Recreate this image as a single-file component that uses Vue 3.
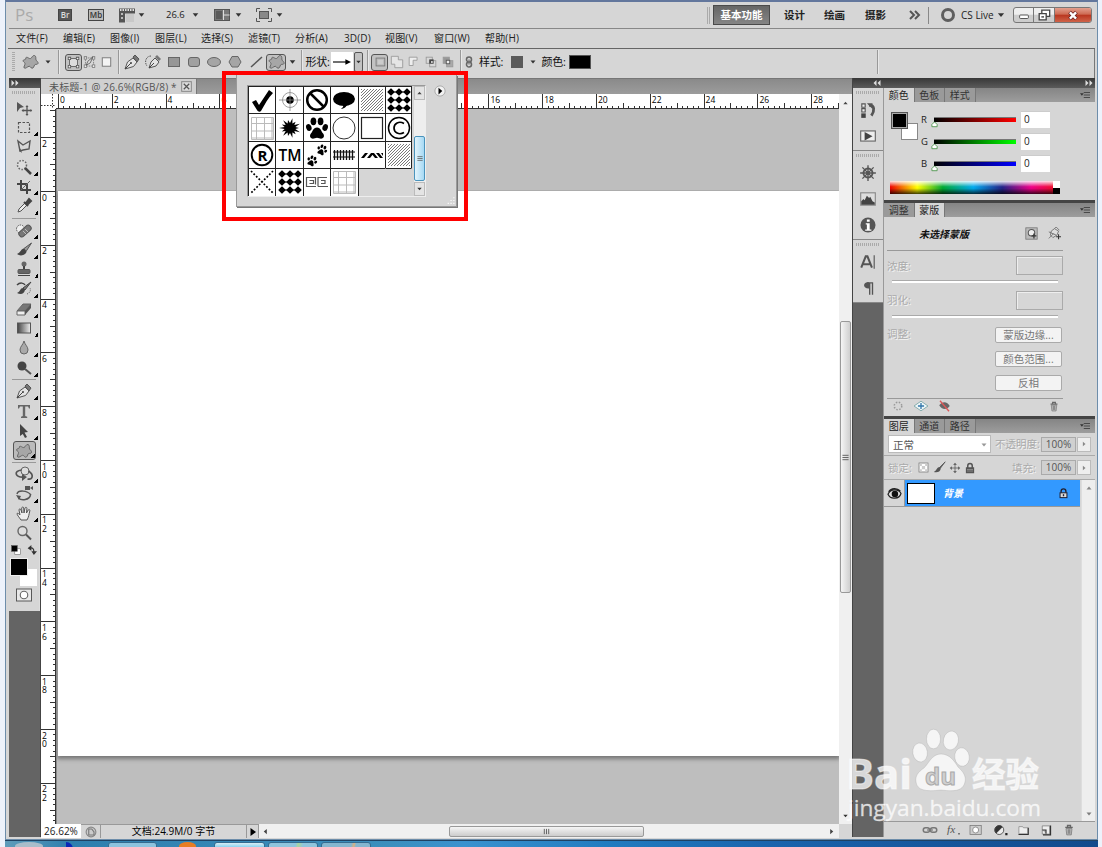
<template>
  <div class="desktop">
    <div class="window">
      <header class="app-bar">
        <span class="ps">Ps</span>
        <span class="badge">Br</span>
        <span class="badge">Mb</span>
        <Icon name="film" /><Icon name="down" />
        <span class="zoom-val">26.6</span><Icon name="down" />
        <Icon name="arrange" /><Icon name="down" />
        <Icon name="screen" /><Icon name="down" />
        <i></i>
        <span class="double-line"></span>
        <button class="ws active">基本功能</button>
        <button v-for="w in workspaces" :key="w" class="ws">{{ w }}</button>
        <Icon name="more" />
        <span class="v-line"></span>
        <Icon name="ring" />
        <span class="cs-live">CS Live<Icon name="down" :w="10" /></span>
        <div class="win-btns">
          <span><Icon name="min" :w="18" :h="14" /></span>
          <span><Icon name="restore" :w="16" :h="14" /></span>
          <span class="close"><Icon name="close" :w="14" :h="11" /></span>
        </div>
      </header>

      <nav class="menu">
        <span v-for="m in menus" :key="m">{{ m }}</span>
      </nav>

      <div class="options">
        <i class="grip-v"></i>
        <Icon name="blob" :w="17" /><Icon name="down" :w="8" />
        <i class="sep"></i>
        <b class="picked"><Icon name="shapeLayer" :w="13" :h="13" /></b>
        <Icon name="paths" :w="13" /><Icon name="fillPx" :w="15" />
        <i class="sep"></i>
        <Icon name="pen" :w="18" /><Icon name="freePen" :w="20" />
        <Icon name="rect" /><Icon name="round" /><Icon name="ellipse" /><Icon name="polygon" /><Icon name="line" />
        <b class="picked wide"><Icon name="blob" :w="17" /></b>
        <Icon name="down" :w="9" />
        <i class="sep"></i>
        <span class="label">形状:</span>
        <b class="preview"><Icon name="arrow" :w="18" :h="18" /></b>
        <b class="dd"><Icon name="down" :w="7" /></b>
        <i class="sep"></i>
        <b class="picked"><Icon name="opNew" :w="14" :h="14" /></b>
        <Icon name="opAdd" :w="14" /><Icon name="opSub" :w="14" /><Icon name="opInt" :w="14" /><Icon name="opXor" :w="14" />
        <i class="sep"></i>
        <Icon name="chain" :w="10" />
        <span class="label">样式:</span>
        <b class="style-swatch"></b>
        <Icon name="down" :w="8" />
        <span class="label">颜色:</span>
        <b class="color-swatch"></b>
        <i></i>
        <i class="sep"></i>
      </div>

      <main class="workspace">
        <aside class="tools">
          <div class="dark-head"><Icon name="ffwd" :w="8" :h="8" /></div>
          <div class="tool-body">
            <i class="grip-h"></i>
            <template v-for="(group, g) in tools" :key="g">
              <i v-if="g" class="tool-sep"></i>
              <div v-for="t in group" :key="t" class="tool" :class="{ active: t === 'blob' }">
                <Icon :name="t" :w="18" :h="18" />
                <em v-if="t !== 'move' && t !== 'zoom'"></em>
              </div>
            </template>
            <div class="mini"><Icon name="defaults" :w="12" :h="12" /><Icon name="swap" :w="12" :h="12" /></div>
            <div class="swatches"><b class="bg"></b><b class="fg"></b></div>
            <Icon name="quickMask" :w="16" :h="12" />
          </div>
        </aside>

        <section class="doc">
          <div class="tab-bar">
            <div class="doc-tab"><span>未标题-1 @ 26.6%(RGB/8) *</span><Icon name="tabClose" :w="11" :h="11" /></div>
          </div>
          <div class="doc-grid">
            <svg class="corner" width="15" height="15"><path d="M11.5 0v15M0 11.5h15" stroke="#333" stroke-dasharray="1.5 1.5" /></svg>
            <svg class="ruler-h" width="783" height="15">
              <path :d="hTicks" stroke="#333" fill="none" />
              <text v-for="n in hNumbers" :key="n.x" :x="n.x" y="9.3">{{ n.t }}</text>
            </svg>
            <svg class="ruler-v" width="15" height="715">
              <path :d="vTicks" stroke="#333" fill="none" />
              <text v-for="(n, i) in vNumbers" :key="i" x="1" :y="n.y">{{ n.t }}</text>
            </svg>
            <div class="pasteboard"><div class="canvas"></div></div>
            <div class="scroll-v">
              <Icon name="up" :w="7" :h="8" />
              <div class="thumb"><Icon name="gripLines" :w="7" :h="7" /></div>
              <Icon name="down" :w="7" :h="8" />
            </div>
          </div>
          <footer class="status">
            <span class="pct">26.62%</span>
            <span class="clock"><Icon name="clock" :w="12" :h="12" /></span>
            <span class="info">文档:24.9M/0 字节</span>
            <span class="play"><Icon name="play" :w="8" :h="8" /></span>
            <div class="scroll-h">
              <Icon name="left" :w="7" :h="7" />
              <div class="thumb"><Icon name="gripCols" :w="9" :h="7" /></div>
              <Icon name="right" :w="7" :h="7" />
            </div>
            <i></i>
          </footer>
        </section>

        <aside class="right">
          <div class="dark-head"><Icon name="rewind" :w="8" :h="8" /><Icon name="ffwd" :w="8" :h="8" /></div>
          <div class="right-cols">
            <div class="dock">
              <div v-for="(group, g) in dock" :key="g" class="dock-group">
                <i class="grip-h"></i>
                <Icon v-for="d in group" :key="d" :name="d" :w="18" :h="18" />
              </div>
            </div>

            <div class="panels">
              <section class="panel color">
                <div class="tabs"><span class="on">颜色</span><span>色板</span><span>样式</span><Icon name="panelMenu" :w="14" :h="10" /></div>
                <div class="color-body">
                  <div class="pair"><b class="bg"></b><b class="fg"></b></div>
                  <div class="channels">
                    <div v-for="c in channels" :key="c.name" class="channel">
                      <span>{{ c.name }}</span>
                      <div class="track" :style="{ background: `linear-gradient(90deg, #000, ${c.end})` }">
                        <Icon name="knob" :w="9" :h="7" />
                      </div>
                      <span class="field">{{ c.value }}</span>
                    </div>
                  </div>
                </div>
                <div class="spectrum"><i></i></div>
              </section>

              <section class="panel mask">
                <div class="tabs"><span>调整</span><span class="on">蒙版</span><Icon name="panelMenu" :w="14" :h="10" /></div>
                <div class="mask-title"><span>未选择蒙版</span><Icon name="pixelMask" :w="13" :h="13" /><Icon name="vectorMask" :w="13" :h="13" /></div>
                <div v-for="s in ['浓度:', '羽化:']" :key="s" class="mask-slider">
                  <div><span class="ghost">{{ s }}</span><b></b></div>
                  <i></i>
                </div>
                <div class="mask-adjust">
                  <span class="ghost">调整:</span>
                  <div><button v-for="b in maskButtons" :key="b">{{ b }}</button></div>
                </div>
                <div class="mask-foot"><Icon name="dotted" :w="12" :h="12" /><Icon name="apply" :w="16" :h="14" /><Icon name="noEye" :w="13" :h="12" /><Icon name="trash" :w="12" :h="11" /></div>
              </section>

              <section class="panel layers">
                <div class="tabs"><span class="on">图层</span><span>通道</span><span>路径</span><Icon name="panelMenu" :w="14" :h="10" /></div>
                <div class="layer-row">
                  <div class="select"><span>正常</span><Icon name="down" :w="8" :h="8" /></div>
                  <span class="ghost">不透明度:</span>
                  <b class="percent">100%</b><b class="step"><Icon name="right" :w="6" :h="6" /></b>
                </div>
                <div class="layer-row locks">
                  <span class="ghost">锁定:</span>
                  <Icon name="checker" :w="13" :h="13" /><Icon name="brushSm" :w="13" :h="13" /><Icon name="cross" :w="12" :h="12" /><Icon name="lock" :w="12" :h="12" />
                  <span class="ghost fill">填充:</span>
                  <b class="percent">100%</b><b class="step"><Icon name="right" :w="6" :h="6" /></b>
                </div>
                <div class="layer-list">
                  <div class="layer">
                    <span class="eye"><Icon name="eye" :w="13" :h="13" /></span>
                    <div class="layer-main"><b></b><span>背景</span><Icon name="lockLight" :w="11" :h="11" /></div>
                  </div>
                  <div class="list-scroll"><Icon name="up" :w="8" :h="8" /><Icon name="down" :w="8" :h="8" /></div>
                </div>
                <div class="layers-foot">
                  <Icon v-for="f in layerActions" :key="f" :name="f" :w="16" :h="12" />
                </div>
              </section>
            </div>
          </div>
        </aside>
      </main>
    </div>

    <div class="taskbar">
      <i class="orb"></i><i class="swoosh"></i>
      <i class="task one"></i><i class="orange"></i><i class="task two"></i><i class="task three"></i><i class="task four"></i>
    </div>

    <div class="picker">
      <div class="picker-list">
        <div class="cells">
          <div v-for="(s, i) in shapes" :key="i" :class="{ empty: !s }"><Icon v-if="s" :name="s" :w="26" :h="26" :box="26" /></div>
        </div>
        <div class="picker-scroll">
          <span><Icon name="up" :w="7" :h="8" /></span>
          <div class="blue-thumb"><Icon name="gripLines" :w="6" :h="7" /></div>
          <span><Icon name="down" :w="7" :h="8" /></span>
        </div>
      </div>
      <Icon class="flyout" name="flyout" :w="12" :h="12" />
      <Icon class="resize" name="resize" :w="9" :h="9" />
    </div>
    <div class="highlight"></div>

    <svg class="watermark" width="204" height="98" viewBox="0 0 204 98">
      <g fill="#fff" fill-opacity=".75">
        <g stroke="#999" stroke-opacity=".35" stroke-width=".8">
          <ellipse cx="75" cy="27.500" rx="7.300" ry="9.500" transform="rotate(-8 75 27)" />
          <ellipse cx="88.500" cy="14" rx="7" ry="9.800" />
          <ellipse cx="106" cy="15.500" rx="7.500" ry="9.500" transform="rotate(12 106 15)" />
          <ellipse cx="117" cy="32" rx="7.300" ry="9.300" transform="rotate(-8 117 32)" />
          <path d="M96 29c9 0 14 8 17 13 7 6 8 11 7 15-2 8-8 10-24 8-16 2-24 0-25-8-1-6 2-10 8-14 5-5 8-14 17-14z" />
        </g>
        <g stroke="#fff" stroke-opacity=".5" stroke-width="1.200">
          <text x="1" y="64" font-size="42" font-weight="700" textLength="66" lengthAdjust="spacingAndGlyphs">Bai</text>
          <text x="127" y="62" font-size="34" font-weight="700" textLength="67" lengthAdjust="spacingAndGlyphs">经验</text>
          <text x="3" y="91" font-size="22" stroke-width=".4" textLength="193" lengthAdjust="spacingAndGlyphs">jingyan.baidu.com</text>
        </g>
      </g>
      <text x="80" y="60" font-size="23" font-weight="700" fill="#d0d0d0" stroke="#aaa" stroke-width="1" textLength="31" lengthAdjust="spacingAndGlyphs">du</text>
    </svg>
  </div>
</template>

<script setup>
import { h } from 'vue'

const hatch = (() => {
  let d = ''
  for (let k = 5; k < 48; k += 3) {
    const x1 = Math.max(2, k - 24), x2 = Math.min(24, k - 2)
    d += `M${x1} ${k - x1}L${x2} ${k - x2}`
  }
  return `<path d="${d}" stroke="#555" stroke-width=".8"/>`
})()

const dots = [5, 13, 21].flatMap(y => [5, 13, 21].map(x => `M${x} ${y - 2.8}l2.800 2.800-2.800 2.800-2.800-2.800z`)).join('')
const diamonds = `<path d="${dots}" stroke="#000" stroke-width="1.600" stroke-linejoin="round"/><path d="M2 5h22M2 13h22M2 21h22" stroke="#000"/>`
const gridShape = '<path d="M2.500 2.500h22v22h-22zM7.500 2v22M15.500 2v22M23 2v22M2 8.500h22M2 16h22M2 23h22" fill="none" stroke="#bbb"/>'
const paw = (x, y, s, r) => `<g transform="translate(${x} ${y}) rotate(${r}) scale(${s})"><ellipse cx="-8" cy="-1" rx="2.600" ry="3.400" transform="rotate(-20 -8 -1)"/><ellipse cx="-3.500" cy="-7" rx="2.800" ry="3.800"/><ellipse cx="3.500" cy="-7" rx="2.800" ry="3.800"/><ellipse cx="8" cy="-1" rx="2.600" ry="3.400" transform="rotate(20 8 -1)"/><path d="M0-1c4 0 4 4 6 6 2 3 0 5-2 5l-4-1-4 1c-2 0-4-2-2-5 2-2 2-6 6-6z"/></g>`
const burst = Array.from({ length: 28 }, (_, i) => {
  const a = i * Math.PI / 14, r = i % 2 ? 5.5 : i % 4 ? 11 : 9
  return `${13 + r * Math.cos(a)},${13 + r * Math.sin(a) * 0.9}`
}).join(' ')
const back = (x, y, f = '#d8d8d8') => `<rect x="${x}" y="${y}" width="7" height="7" fill="${f}" stroke="#999"/>`

// Inner markup of every glyph, drawn on a 16x16 box (26x26 for the picker shapes)
const icons = {
  down: '<path d="M3 5h10l-5 6z" fill="#333"/>',
  up: '<path d="M3 11h10L8 5z" fill="#444"/>',
  left: '<path d="M11 2v12L4 8z" fill="#444"/>',
  right: '<path d="M5 2v12l7-6z" fill="#444"/>',
  play: '<path d="M3 0v16l11-8z" fill="#000"/>',
  ffwd: '<path d="M1 2v12l6-6zM9 2v12l6-6z" fill="#ddd"/>',
  rewind: '<path d="M7 2v12L1 8zM15 2v12L9 8z" fill="#ddd"/>',
  film: '<path d="M0 1.500h16v5H6v9H0z" fill="#555"/><path d="M1 3h14" stroke="#ddd" stroke-width="2" stroke-dasharray="1.500 1"/><path d="M2 6h2v2H2zM2 10h2v2H2z" fill="#bbb"/><rect x="7" y="7" width="8" height="8" fill="#c8c8c8"/>',
  arrange: '<rect x=".5" y="2.500" width="15" height="11" fill="#777" stroke="#555"/><path d="M9.500 3v10M9.500 8h6" stroke="#ddd"/><rect x="2" y="4" width="6" height="8" fill="#5a5a5a"/>',
  screen: '<rect x="3.500" y="4.500" width="9" height="7" fill="#888" stroke="#555"/><path d="M.5 5V1.500H4M12 1.500h3.500V5M15.500 11v3.500H12M4 14.500H.5V11" fill="none" stroke="#555"/>',
  more: '<path d="M2 4l4 4-4 4M7 4l4 4-4 4" fill="none" stroke="#555" stroke-width="2"/>',
  ring: '<circle cx="8" cy="8" r="5.500" fill="none" stroke="#5f5f5f" stroke-width="3"/>',
  min: '<rect x="3" y="8" width="10" height="4" rx="1" fill="#fff" stroke="#444"/>',
  restore: '<path d="M5.500 2.500h9v7h-9z" fill="#fff" stroke="#444" stroke-width="1.500"/><path d="M2.500 6.500h8v7h-8z" fill="#fff" stroke="#444" stroke-width="1.500"/><path d="M5 9h3v2H5z" fill="#666"/>',
  close: '<path d="M3 3l10 10M13 3L3 13" stroke="#622" stroke-width="5.500"/><path d="M3.500 3.500l9 9M12.500 3.500l-9 9" stroke="#fff" stroke-width="3.500"/>',
  blob: '<path d="M3 4c2-2 3 1 5 .5C9.500 4 10 1 12 1.500s1 3.500 1.500 4.500 2.500 2 2 3.500-3 .3-3.500 1.500-1 3.500-2.500 3.200S8 12 6.500 12.300 3 15 1.800 14 2.800 11 2.500 9.500.3 7.800.6 6.600 4.500 5.800 3 4z" fill="#a6a6a6" stroke="#666"/>',
  shapeLayer: '<rect x="3" y="3" width="10" height="10" fill="#ddd" stroke="#555"/><path d="M1 1h4v4H1zM11 1h4v4h-4zM1 11h4v4H1zM11 11h4v4h-4z" fill="#555"/><path d="M2 2h2v2H2zM12 2h2v2h-2zM2 12h2v2H2zM12 12h2v2h-2z" fill="#eee"/>',
  paths: '<path d="M3 3h10v10H3z" fill="none" stroke="#777" stroke-dasharray="2 1"/><path d="M1 1h4v4H1zM11 1h4v4h-4zM1 11h4v4H1zM11 11h4v4h-4z" fill="#777"/><path d="M2 2h2v2H2zM12 2h2v2h-2zM2 12h2v2H2zM12 12h2v2h-2z" fill="#eee"/><path d="M4 12l2-5 6-5-3 7z" fill="#ddd" stroke="#555"/>',
  fillPx: '<rect x="3.500" y="3.500" width="9" height="9" fill="#f3f3f3" stroke="#777"/>',
  pen: '<path d="M1 15l2.500-7L9 4l4 4-3.500 4.500z" fill="#e4e4e4" stroke="#555"/><path d="M1 15l6-6" stroke="#444"/><circle cx="7" cy="9" r="1" fill="#444"/><path d="M9 3l2-2 4 4-2 3z" fill="#777" stroke="#555"/>',
  freePen: '<path d="M4 14l2-6 4-4 4 4-3 4z" fill="#e4e4e4" stroke="#555"/><path d="M4 14l5-5" stroke="#444"/><path d="M10 3l2-2 4 4-2 2z" fill="#777"/><path d="M6 2C1 2-1 8 2 12" fill="none" stroke="#555" stroke-dasharray="1.500 1"/>',
  rect: '<rect x="2.500" y="3.500" width="11" height="9" fill="#969696" stroke="#666"/>',
  round: '<rect x="2.500" y="3.500" width="11" height="9" rx="2.500" fill="#a0a0a0" stroke="#666"/>',
  ellipse: '<ellipse cx="8" cy="8" rx="6.500" ry="4.500" fill="#a5a5a5" stroke="#666"/>',
  polygon: '<path d="M5 2.500h6L14 8l-3 5H5L2 8z" fill="#a5a5a5" stroke="#666"/>',
  line: '<path d="M3 13L14 3" stroke="#555" stroke-width="1.500"/>',
  arrow: '<path d="M0 8h12" stroke="#000"/><path d="M11 5.500l5 2.500-5 2.500z"/>',
  opNew: '<rect x="3.500" y="3.500" width="10" height="9" fill="#bbb" stroke="#777"/><rect x="5.500" y="5.500" width="6" height="5" fill="#ccc"/>',
  opAdd: '<path d="M1.500 1.500h8v4h5v9h-9v-4h-4z" fill="#e5e5e5" stroke="#999"/>',
  opSub: '<path d="M2.500 12V2.500h9V6H7v6z" fill="#eee" stroke="#999"/>',
  opInt: back(2.5, 2.5) + back(6.5, 6.5) + '<rect x="6" y="5" width="5" height="5" fill="#444"/><rect x="8" y="7" width="2" height="2" fill="#ddd"/>',
  opXor: back(2.5, 2.5, '#999') + back(6.5, 6.5, '#aaa') + '<rect x="6" y="6" width="4" height="4" fill="#eee" stroke="#555"/>',
  chain: '<rect x="4" y="0" width="8" height="8" rx="4" fill="none" stroke="#666" stroke-width="2.500"/><rect x="4" y="8" width="8" height="8" rx="4" fill="none" stroke="#666" stroke-width="2.500"/><path d="M8 4v8" stroke="#777" stroke-width="2"/>',
  tabClose: '<rect x="1" y="1" width="14" height="14" fill="#ddd" stroke="#888" stroke-width="1.500"/><path d="M4 4l8 8M12 4l-8 8" stroke="#555" stroke-width="1.800"/>',
  move: '<path d="M1 2l7 5-4 1-3 4z" fill="#555"/><path d="M11 6v9M6.500 10.500h9" stroke="#555" stroke-width="1.300"/><path d="M9.500 7L11 5l1.500 2zM9.500 14l1.500 2 1.500-2zM7.500 9l-2 1.500 2 1.500zM14.500 9l1.700 1.500-1.700 1.500z" fill="#555"/>',
  marquee: '<rect x="2.500" y="2.500" width="11" height="10" fill="none" stroke="#555" stroke-width="1.200" stroke-dasharray="2.500 1.500"/>',
  lasso: '<path d="M2 2l5 4 7-4-1 8-6 1-3 1z" fill="#d8d8d8" stroke="#555" stroke-width="1.400"/><path d="M5 10c-2 1-1 3 1 3" fill="none" stroke="#555"/>',
  wand: '<circle cx="6" cy="6" r="4.500" fill="#ddd" stroke="#666" stroke-width="1.500" stroke-dasharray="1.500 1.500"/><path d="M9 9l6 6" stroke="#444" stroke-width="2.500"/>',
  crop: '<path d="M5 1v10h10M1 5h10v10" fill="none" stroke="#444" stroke-width="2"/><path d="M4 12L14 2" stroke="#666"/>',
  dropper: '<path d="M2 14l1-3 6-6 2 2-6 6z" fill="#eee" stroke="#555"/><path d="M8 4l4 4M10 5l3-4 2 2-3 3z" stroke="#444" stroke-width="2" fill="#444"/>',
  heal: '<circle cx="4.500" cy="7" r="4" fill="#eee" stroke="#555" stroke-dasharray="1.500 1"/><rect x="2" y="6" width="14" height="6" rx="2.500" transform="rotate(-42 9 9)" fill="#777" stroke="#555"/><path d="M7 9l3 3M9 7l3 3" stroke="#bbb"/>',
  brush: '<path d="M15.500 1L8 6.500l2 3z" fill="#999" stroke="#555"/><path d="M8 6.500c-3 0-3 4-7 5.500 3 2.500 8 1.500 9.500-2z" fill="#444"/>',
  stamp: '<circle cx="8" cy="3" r="2.500" fill="#666"/><path d="M7 5h2v4H7z" fill="#444"/><rect x="2" y="8.500" width="12" height="4" rx="1" fill="#666" stroke="#555"/><path d="M2 14.500h12" stroke="#444"/>',
  history: '<path d="M15 1L7 7l2 2z" fill="#777" stroke="#444"/><path d="M7 7c-3 0-2 3-6 5 4 2 7 1 8-3z" fill="#444"/><path d="M1 4c3-3 7-2 8 0" fill="none" stroke="#444" stroke-width="1.500"/><path d="M11 13c3-1 4-4 3-6" fill="none" stroke="#666" stroke-dasharray="1 1"/>',
  eraser: '<path d="M1 10l6-7h8l-6 7z" fill="#777" stroke="#666"/><path d="M1 10h8v4H1z" fill="#eee" stroke="#666"/><path d="M9 10l6-7v4l-6 7z" fill="#555"/>',
  gradient: '<defs><linearGradient id="tg"><stop stop-color="#444"/><stop offset="1" stop-color="#eee"/></linearGradient></defs><rect x="1.500" y="3" width="13" height="10" fill="url(#tg)" stroke="#555"/>',
  blur: '<path d="M8 1c1 4 4 5.500 4 9a4 4 0 0 1-8 0c0-3.500 3-5 4-9z" fill="#a9a9a9" stroke="#666"/>',
  dodge: '<circle cx="6" cy="6" r="4.500" fill="#444"/><path d="M9 9l6 5" stroke="#555" stroke-width="2"/>',
  type: '<path d="M2 2h12v3.500h-1L12 3.500H9.200v9.500l2 .7V15H5v-1.300l1.800-.7V3.500H4L3 5.500H2z" fill="#666"/>',
  select: '<path d="M4 1l8 8-3.500.5L11 14l-2 1-2.200-4L4 13z" fill="#444"/>',
  orbit: '<circle cx="9" cy="5" r="4" fill="#ddd" stroke="#666"/><path d="M5.500 4C-3 5-1 12 9 11M12.500 5c6 4 4 9-1 8" fill="none" stroke="#555" stroke-width="1.700"/><path d="M6 8l5 3-5 4z" fill="#555"/>',
  camera: '<path d="M14.500 9c-1 5-9 6-12 3M1 8c1-4 10-4 14 1" fill="none" stroke="#555" stroke-width="1.500"/><path d="M9 0h5v4H9zM14 2l3-2v4z" fill="#555"/><path d="M0 9l3 5 2-4z" fill="#555"/>',
  hand: '<path d="M5 14C3 11 1 9 1 7.500c1-.7 2 .5 3 1.500L3 4c0-1.500 1.500-1.500 2 0l1 3-.3-5c.3-1.300 1.800-1.300 2 0L8 7l1-5c.5-1.200 2-.8 1.900.5L10.500 7l1.700-3c.8-1 2-.3 1.600 1-.8 3-1 6-2.800 9z" fill="#eee" stroke="#555"/>',
  zoom: '<circle cx="6.500" cy="6" r="4.500" fill="#ddd" stroke="#666" stroke-width="1.400"/><path d="M10 9.500l5 5" stroke="#555" stroke-width="2"/>',
  defaults: '<rect x="6" y="6" width="9" height="9" fill="#fff" stroke="#777"/><rect x="1" y="1" width="9" height="9" fill="#000" stroke="#555"/>',
  swap: '<path d="M5 5c4-1 6 1 6 6" fill="none" stroke="#333" stroke-width="2"/><path d="M7 0v9L1 5zM7 10h9l-5 6z" fill="#333"/>',
  quickMask: '<rect x="-2" y="0" width="20" height="16" fill="#e8e8e8" stroke="#555" stroke-width="1.300"/><circle cx="8" cy="8" r="5" fill="#fff" stroke="#666" stroke-width="1.500"/>',
  gripLines: '<path d="M1 3h14M1 8h14M1 13h14" stroke="#555" stroke-width="2"/>',
  gripCols: '<path d="M3 2v12M8 2v12M13 2v12" stroke="#555" stroke-width="2"/>',
  clock: '<circle cx="8" cy="8" r="6.500" fill="#ccc" stroke="#888" stroke-width="1.500"/><path d="M5 4h4l3 4v4H5z" fill="none" stroke="#777" stroke-width="1.500"/>',
  histPanel: '<path d="M2.500 2.500h3v3h-3zM2.500 6.800h3v3h-3z" fill="#eee" stroke="#555"/><path d="M2 11h4v4H2z" fill="#444"/><path d="M9 4c5-1 5 5 2 9" fill="none" stroke="#555" stroke-width="2.500"/><path d="M7 2h5v5z" fill="#555"/>',
  actions: '<rect x="1.500" y="3.500" width="13" height="9" fill="#eee" stroke="#666"/><path d="M5 4.500v7.500l7-3.700z" fill="#444"/>',
  wheel: '<circle cx="8" cy="8" r="4" fill="none" stroke="#555" stroke-width="1.700"/><path d="M8 1v14M1 8h14M3 3l10 10M13 3L3 13" stroke="#555" stroke-width="1.200"/><circle cx="8" cy="8" r="1.500" fill="#555"/>',
  histogram: '<rect x="1.500" y="2.500" width="13" height="11" fill="#ddd" stroke="#888"/><path d="M2 13v-3l2-2 1 1 2-4 2 2 1-1 2 4 2 1v2z" fill="#444"/>',
  about: '<circle cx="8" cy="8" r="6.700" fill="#555"/><path d="M7 3h2.500v2.200H7zM6 6.500h3.500V12H11v1H5.500v-1H7V7.500H6z" fill="#fff"/>',
  charPanel: '<path d="M2 13L6 3h1.500l4 10M3.500 10h6" fill="none" stroke="#555" stroke-width="1.800"/><path d="M13.500 2v12" stroke="#555"/>',
  para: '<path d="M12 3v11M9.500 3v11M12.500 3.500H7" stroke="#555" stroke-width="1.200"/><path d="M9 3C3 2 3 9 9 8.500z" fill="#555"/>',
  panelMenu: '<path d="M0 5h6L3 9z" fill="#333"/><path d="M6 4h10M6 8h10M6 12h10" stroke="#444" stroke-width="1.500"/>',
  knob: '<path d="M8 2l6 6v5H2V8z" fill="#fff" stroke="#4a944a" stroke-width="2"/>',
  pixelMask: '<rect x="1" y="1" width="14" height="14" fill="#bbb" stroke="#777"/><circle cx="8" cy="7" r="4" fill="#eee" stroke="#555" stroke-width="1.300"/><path d="M11 8v6M8 11h6" stroke="#333" stroke-width="1.500"/>',
  vectorMask: '<path d="M3 10l1-5 4-3 5 3-2 5-5 3zM1 6l9 4M1 14l6-6M8 2l2-2 4 4" fill="#ddd" stroke="#666"/><path d="M13 9v6M10 12h6" stroke="#333" stroke-width="1.300"/>',
  dotted: '<circle cx="8" cy="8" r="5" fill="none" stroke="#999" stroke-width="2" stroke-dasharray="2 2"/>',
  apply: '<path d="M0 8l8-5.500L16 8l-8 5.500z" fill="#eef6f8" stroke="#79a5a5"/><path d="M8 4.500v7M4.500 8h7" fill="none" stroke="#37a" stroke-width="1.500"/>',
  noEye: '<path d="M1 7c4-6 11-5 14 1-4 6-11 5-14-1z" fill="#666"/><path d="M2 1l12 14" stroke="#d55" stroke-width="1.800"/>',
  eye: '<path d="M0 9c3-7 13-7 16-1-2 7-13 8-16 1z" fill="#ddd" stroke="#222" stroke-width="1.500"/><circle cx="8.500" cy="8.500" r="4" fill="#111"/><path d="M1 6c3-5 10-5 14-1" stroke="#222" stroke-width="2" fill="none"/>',
  checker: '<rect x="2.500" y="2.500" width="11" height="11" fill="#fff" stroke="#777"/><path d="M3 3h3v3H3zM10 3h3v3h-3zM6 6h4v4H6zM3 10h3v3H3zM10 10h3v3h-3z" fill="#ccc"/>',
  brushSm: '<path d="M15 1L8 8l1 1z" fill="#555" stroke="#555"/><path d="M8 7.500c-3 0-3 4-7 6 4 1 8 0 8.500-4z" fill="#555"/>',
  cross: '<path d="M8 2v12M2 8h12" stroke="#555"/><path d="M5.500 4L8 1l2.500 3zM5.500 12L8 15l2.500-3zM4 5.500L1 8l3 2.500zM12 5.500L15 8l-3 2.500z" fill="#666"/>',
  lock: '<path d="M5 8V5c0-4 6-4 6 0v3" fill="none" stroke="#555" stroke-width="2"/><rect x="2.500" y="7" width="11" height="8" fill="#555"/><path d="M4 10h8M4 12h8" stroke="#999"/>',
  lockLight: '<path d="M4.500 8V5c0-5 7-5 7 0v3" fill="none" stroke="#223" stroke-width="2"/><rect x="3" y="7" width="10" height="7" fill="#ddd" stroke="#223" stroke-width="1.500"/><path d="M8 9v3" stroke="#223" stroke-width="2"/>',
  link: '<rect x="-1" y="5" width="8.500" height="6" rx="3" fill="none" stroke="#777" stroke-width="2"/><rect x="8.500" y="5" width="8.500" height="6" rx="3" fill="none" stroke="#777" stroke-width="2"/><path d="M4 8h8" stroke="#777" stroke-width="1.500"/>',
  fx: '<text x="0" y="12" font-size="15" font-style="italic" font-family="Liberation Serif, serif" fill="#555">fx</text><path d="M15 12h2v2h-2z" fill="#555"/>',
  addMask: '<rect x="0" y="2" width="15" height="12" fill="#ccc" stroke="#777"/><circle cx="7.500" cy="8" r="4" fill="#fff" stroke="#777"/>',
  adjust: '<circle cx="7" cy="8" r="6" fill="#eee" stroke="#333"/><path d="M3 12A5.500 5.500 0 0 1 11 4z" fill="#333" stroke="#333"/><path d="M15 12h3v3h-3z" fill="#222"/>',
  folder: '<path d="M2.500 3.500h5l1 1.500h6v8h-12z" fill="#eee" stroke="#888"/><path d="M15 5v9H2" stroke="#333" stroke-width="1.500" fill="none"/>',
  newLayer: '<path d="M3 2.500h10v11H3z" fill="#eee" stroke="#777"/><path d="M3 8h5v5" fill="#bbb" stroke="#333" stroke-width="1.500"/><path d="M14 2v12.500H4" stroke="#333" stroke-width="1.700" fill="none"/>',
  trash: '<path d="M3 4.500h10M6 4V2h4v2" fill="none" stroke="#666" stroke-width="1.700"/><path d="M4 6h8l-1 8.500H5z" fill="#bbb" stroke="#777"/><path d="M7 7v6M9 7v6" stroke="#666"/>',
  flyout: '<circle cx="8" cy="8" r="6.800" fill="#f2f2f2" stroke="#999"/><path d="M6 3.500v9l5-4.500z"/>',
  resize: '<path d="M14 2v2M14 7v2M14 12v2M9 7v2M9 12v2M4 12v2" stroke="#fff" stroke-width="2"/>',
  check: '<path d="M3 15l4-2 3 5L20 3l4 3c-5 5-8 11-12 18-1 1-3 1-4-1z"/>',
  target: '<circle cx="13" cy="13" r="7.500" fill="none" stroke="#888" stroke-width=".8"/><path d="M13 2v22M2 13h22" stroke="#888" stroke-width=".8"/><circle cx="13" cy="13" r="3.800"/><path d="M13 9v8M9 13h8" stroke="#999" stroke-width=".7"/>',
  ban: '<circle cx="13" cy="13" r="9.800" fill="none" stroke="#000" stroke-width="2.500"/><path d="M6.500 6.500l13 13" stroke="#000" stroke-width="2.500"/>',
  speech: '<ellipse cx="13" cy="12" rx="11" ry="7"/><path d="M12 17c1 3-1 4-2 5 4-.5 6-3 7-6z"/>',
  hatch,
  diamonds,
  gridShape,
  burst: `<polygon points="${burst}"/>`,
  paw: paw(13, 13.5, 1.02, 0),
  circle: '<circle cx="13" cy="13" r="11" fill="none" stroke="#333"/>',
  square: '<rect x="2.500" y="2.500" width="21" height="21" fill="#fff" stroke="#222" stroke-width="1.200"/>',
  copyright: '<circle cx="13" cy="13" r="10.500" fill="none" stroke="#000" stroke-width="1.500"/><path d="M18 8.500C13 5.500 8 8.500 8 13s5 7.500 10 4.500" fill="none" stroke="#000" stroke-width="1.700"/>',
  registered: '<circle cx="13" cy="13" r="10.300" fill="none" stroke="#000" stroke-width="1.900"/><text x="13.500" y="18.500" text-anchor="middle" font-size="15" font-weight="700" font-family="Open Sans, sans-serif">R</text>',
  tm: '<text x="1.500" y="19" font-size="16" font-weight="600" font-family="Open Sans, sans-serif" textLength="23" lengthAdjust="spacingAndGlyphs">TM</text>',
  prints: paw(18, 8, 0.48, 25) + paw(8, 19, 0.48, 25),
  fence: '<path d="M2 10h22M2 15h22" stroke="#000"/><path d="M3.500 8v10M6.500 8v10M9.500 8v10M12.500 8v10M15.500 8v10M18.500 8v10M21.500 8v10" stroke="#111" stroke-width="1.300"/>',
  stripes: '<path d="M2 16l4-5h3l-4 5zM8 16l4-5h3l-4 5zM12 11h3l4 5h-3zM17 11h3l4 5h-3zM22 11h2v3z"/>',
  cross2: '<path d="M2 2l22 22M24 2L2 24" stroke="#000" stroke-width="1.700" stroke-dasharray="1.800 1.800"/>',
  greek: '<path d="M2.500 8.500h9v7M2.500 8v9.500h9.500M5.500 14.500h4v-3h-4M14 17.500V8.500h9M14 17.500h10M17 14.500h4v-3h-4" fill="none" stroke="#555" stroke-width="1.200"/>'
}

const Icon = ({ name, w = 16, h: height = 16, box = 16 }) => h('svg', {
  width: w,
  height,
  viewBox: `0 0 ${box} ${box}`,
  preserveAspectRatio: 'xMidYMid meet',
  class: ['icon', 'i-' + name],
  innerHTML: icons[name]
})
Icon.props = ['name', 'w', 'h', 'box']

const workspaces = ['设计', '绘画', '摄影']
const menus = ['文件(F)', '编辑(E)', '图像(I)', '图层(L)', '选择(S)', '滤镜(T)', '分析(A)', '3D(D)', '视图(V)', '窗口(W)', '帮助(H)']
const tools = [
  ['move', 'marquee', 'lasso', 'wand', 'crop', 'dropper'],
  ['heal', 'brush', 'stamp', 'history', 'eraser', 'gradient', 'blur', 'dodge'],
  ['pen', 'type', 'select', 'blob'],
  ['orbit', 'camera', 'hand', 'zoom']
]
const dock = [['histPanel', 'actions'], ['wheel', 'histogram', 'about'], ['charPanel', 'para']]
const channels = [
  { name: 'R', end: '#f00', value: 0 },
  { name: 'G', end: '#0f0', value: 0 },
  { name: 'B', end: '#00f', value: 0 }
]
const maskButtons = ['蒙版边缘...', '颜色范围...', '反相']
const layerActions = ['link', 'fx', 'addMask', 'adjust', 'folder', 'newLayer', 'trash']
const shapes = [
  'check', 'target', 'ban', 'speech', 'hatch', 'diamonds',
  'gridShape', 'burst', 'paw', 'circle', 'square', 'copyright',
  'registered', 'tm', 'prints', 'fence', 'stripes', 'hatch',
  'cross2', 'diamonds', 'greek', 'gridShape', '', ''
]

// Rulers: one major mark every two units, ten subdivisions between them
const STEP = 53.8
let hTicks = 'M0 14.5H783'
const hNumbers = []
for (let i = 0; i < 15; i++) {
  const x = 2.5 + i * STEP
  hNumbers.push({ x: x + 1.5, t: i * 2 })
  for (let k = 0; k < 10; k++) {
    const tx = Math.round(x + k * STEP / 10 - 0.5) + 0.5
    hTicks += `M${tx} 15V${k === 0 ? 0 : k === 5 ? 9 : 12}`
  }
}

let vTicks = 'M14.5 0V715'
const vNumbers = []
for (let i = -2; i < 12; i++) {
  const y = 82.5 + i * STEP
  for (let k = 0; k < 10; k++) {
    const ty = Math.round(y + k * STEP / 10 - 0.5) + 0.5
    vTicks += `M15 ${ty}H${k === 0 ? 0 : k === 5 ? 9 : 12}`
  }
  if (y < 0) continue
  String(Math.abs(i * 2)).split('').forEach((t, d) => vNumbers.push({ y: y + 9 + d * 8.7, t }))
}
</script>

<style>
body { margin: 0; background: #edf2fb; overflow: hidden; }
svg.icon { display: block; flex: none; overflow: visible; }
</style>

<style scoped>
.desktop {
  position: relative; width: 1102px; height: 847px; overflow: hidden; background: #edf2fb;
  font: 11px/14px "Open Sans", "Noto Sans CJK SC", sans-serif; color: #222;
}
b, i, em { font-style: normal; font-weight: 400; display: block; }
button { font: inherit; padding: 0; border: 0; background: none; white-space: nowrap; }
.window {
  box-sizing: border-box; width: 1093px; height: 840px; margin-left: 5px; padding: 0 2px 2px;
  border: solid #6d8daa; border-width: 2px 1px 1px; border-top-color: #63779d; background: #d6d6d6;
  display: flex; flex-direction: column;
}

/* application bar */
.app-bar {
  display: grid; height: 26px; align-items: center; flex: none; border-bottom: 1px solid #888; margin-left: 1px;
  grid-template-columns: 49px 30px 31px 17px 30px 24px 24px 19px 23px 18px 9px 424px 6px 71px 40px 41px 43px 20px 12px 21px 52px 80px;
}
.ps { padding-left: 6px; font-size: 17px; line-height: 20px; color: #aaa; }
.badge { justify-self: start; width: 12px; height: 10px; background: #575757; border: 1px solid #444; color: #ddd; font-size: 8px; line-height: 10px; text-align: center; font-weight: 600; }
.badge + .badge { background: #bbb; color: #333; width: 14px; }
.app-bar > .i-down { width: 9px; margin-left: 1px; }
.zoom-val { font-size: 9.500px; }
.double-line { height: 17px; width: 1px; border: solid #aaa; border-width: 0 1px; }
.v-line { height: 17px; border-left: 1px solid #888; }
.ws { font-weight: 600; font-size: 10.500px; text-align: left; color: #222; }
.ws.active { width: 57px; height: 20px; text-align: center; background: linear-gradient(#666, #858585); border: 1px solid #4a4a4a; color: #fff; font-size: 10.500px; }
.cs-live { display: flex; align-items: center; gap: 2px; font-size: 10px; white-space: nowrap; }
.win-btns { display: grid; grid-template-columns: 20px 21px 36px; width: 77px; height: 14px; border: 1px solid #777; border-radius: 3px; background: linear-gradient(#eee 45%, #ccc 50%); overflow: hidden; }
.win-btns span { display: flex; align-items: center; justify-content: center; border-right: 1px solid #777; }
.win-btns .close { background: linear-gradient(#e3a08e 0, #cd6a52 45%, #b9361f 50%, #cf6349); border: 0; }

.menu {
  display: grid; height: 19px; line-height: 19px; flex: none; border-bottom: 1px solid #666; padding-left: 8px; font-size: 10px; white-space: nowrap; letter-spacing: .15px;
  grid-template-columns: 47px 47px 45px 46px 47px 47px 49px 41px 49px 51px 60px;
}

/* options bar */
.options {
  display: grid; height: 29px; flex: none; margin-left: 1px; align-items: center; justify-items: center; border-right: 1px solid #777;
  grid-template-columns: 9px 25px 10px 11px 18px 15px 18px 7px 20px 21px 21px 20px 20px 21px 21px 20px 12px 6px 27px 22px 10px 8px 17px 17px 17px 17px 18px 6px 12px 32px 20px 12px 29px 23px 283px 6px;
  box-sizing: border-box; padding-bottom: 3px;
}
.sep { width: 1px; height: 24px; background: #999; box-shadow: 1px 0 #e8e8e8; }
.grip-v { width: 3px; height: 20px; background: repeating-linear-gradient(#aaa 0 1px, transparent 1px 2px); }
.grip-h { width: 24px; height: 3px; background: repeating-linear-gradient(90deg, #aaa 0 1px, transparent 1px 2px); }
.picked { box-sizing: border-box; width: 17px; height: 17px; display: flex; align-items: center; justify-content: center; border: 1px solid #555; border-radius: 3px; background: #c2c2c2; }
.picked.wide { width: 20px; }
.label { font-size: 11px; white-space: nowrap; color: #111; letter-spacing: -.3px; }
.preview { width: 22px; height: 21px; display: flex; align-items: center; justify-content: center; background: #fff; }
.dd { box-sizing: border-box; width: 9px; height: 20px; display: flex; align-items: center; justify-content: center; border: 1px solid #555; border-radius: 2px; background: #c2c2c2; }
.style-swatch { width: 12px; height: 12px; background: #5a5a5a; }
.color-swatch { width: 22px; height: 14px; background: #000; border: 1px solid #555; box-sizing: border-box; }

.workspace { flex: 1; min-height: 0; display: flex; margin-left: 1px; }
.dark-head { box-sizing: border-box; height: 10px; background: linear-gradient(#383838, #5b5b5b); display: flex; align-items: center; justify-content: space-between; padding: 0 2px; }

/* tool box */
.tools { width: 31px; background: #646464; border-right: 1px solid #444; }
.tool-body { height: 523px; background: #d6d6d6; display: flex; flex-direction: column; align-items: center; border-right: 1px solid #ddd; box-sizing: border-box; }
.tool-body > .grip-h { margin: 3px 0 4px; }
.tool { position: relative; box-sizing: border-box; width: 23px; height: 19.700px; flex: none; display: flex; align-items: center; justify-content: center; }
.tool svg { width: 16px; height: 16px; }
.tool.active { border: 1px solid #555; border-radius: 3px; background: #bbb; }
.tool em { position: absolute; right: -2px; bottom: 1px; width: 4px; height: 4px; background: linear-gradient(135deg, transparent 50%, #000 50%); }
.tool.active em { right: 0; }
.tool-sep { width: 24px; height: 1px; flex: none; margin: 1.500px 0; background: #999; }
.mini { width: 26px; display: flex; justify-content: space-between; height: 12px; }
.mini svg { width: 10px; height: 10px; margin-top: 2px; }
.swatches, .pair { display: grid; width: 26px; height: 28px; flex: none; margin: 3px 0 3px; }
.swatches b { grid-area: 1 / 1; width: 17px; height: 17px; }
.swatches .bg { place-self: end; background: #fff; }
.swatches .fg { background: #000; border: 1px solid #eee; margin-left: -1px; width: 16px; height: 16px; z-index: 1; }

/* document */
.doc { width: 811px; display: flex; flex-direction: column; }
.tab-bar { height: 16px; background: linear-gradient(#8a8a8a, #9c9c9c); border-top: 1px solid #777; box-sizing: border-box; }
.doc-tab { box-sizing: border-box; width: 156px; height: 15px; padding-left: 8px; display: flex; align-items: center; justify-content: space-between; padding-right: 4px; background: #d0d0d0; color: #555; font-size: 10px; letter-spacing: .15px; white-space: nowrap; border-right: 1px solid #777; }
.doc-grid { display: grid; grid-template: 15px 715px / 15px 783px 13px; }
.doc-grid > svg { background: #fff; display: block; font-size: 8.500px; }
.doc-grid .scroll-v { grid-area: 1 / 3 / 3 / 4; }
.doc-grid .ruler-v { grid-area: 2 / 1; }
.pasteboard { grid-area: 2 / 2; background: #bebebe; overflow: hidden; border-left: 1px solid #8c8c8c; box-sizing: border-box; }
.canvas { height: 565px; margin: 82px 0 0 1px; background: #fff; box-shadow: 0 2px 4px 1px #777; clip-path: inset(-1px 0 -8px -2px); }
.scroll-v { background: #f0f0f0; display: flex; flex-direction: column; align-items: center; padding: 5px 1px 4px; box-sizing: border-box; }
.scroll-v .thumb { box-sizing: border-box; width: 11px; height: 272px; margin: 214px 0 auto; border: 1px solid #999; border-radius: 2px; background: linear-gradient(90deg, #f5f5f5, #cfcfcf); display: flex; align-items: center; justify-content: center; }
.status { height: 13px; display: grid; grid-template-columns: 40px 20px 146px 12px 580px 13px; line-height: 13px; background: #d6d6d6; }
.status > span { box-sizing: border-box; border-right: 1px solid #999; border-top: 1px solid #999; display: flex; align-items: center; justify-content: center; white-space: nowrap; }
.status .pct { background: #fff; font-size: 10px; border: 0; }
.status .info { font-size: 10px; color: #000; }
.scroll-h { background: #f0f0f0; display: flex; align-items: center; padding: 0 4px 0 3px; }
.scroll-h .thumb { box-sizing: border-box; height: 11px; width: 195px; margin: 0 auto 0 180px; border: 1px solid #999; border-radius: 2px; background: linear-gradient(#f5f5f5, #ccc); display: flex; align-items: center; justify-content: center; }

/* right side */
.right { width: 243px; display: flex; flex-direction: column; box-sizing: border-box; border-left: 1px solid #444; }
.right > .dark-head { padding: 0 2px 0 20px; }
.right-cols { flex: 1; display: flex; }
.dock { width: 30px; background: #646464; border-right: 1px solid #999; }
.dock-group { display: flex; flex-direction: column; align-items: center; gap: 8px; background: #d6d6d6; padding: 3px 0 5px; border-bottom: 1px solid #888; }
.dock-group .grip-h { margin-bottom: -1px; }
.panels { flex: 1; display: flex; flex-direction: column; background: #d6d6d6; }
.tabs { height: 14px; display: flex; align-items: center; background: linear-gradient(#858585, #9d9d9d); padding-right: 3px; font-size: 10px; line-height: 14px; }
.tabs span { width: 29.500px; height: 14px; text-align: center; border-right: 1px solid #777; background: #9a9a9a; color: #333; }
.tabs .on { background: #d6d6d6; color: #222; }
.tabs svg { margin-left: auto; }
.panel { box-sizing: border-box; border-bottom: 3px solid #444; flex: none; }
.color { height: 115px; }
.color-body { display: flex; padding-left: 7px; height: 79px; box-sizing: border-box; padding-top: 9px; }
.pair { width: 27px; height: 28px; margin: 1px 0 0; }
.pair b { grid-area: 1 / 1; width: 15px; height: 15px; border: 1px solid #888; background: #fff; }
.pair .bg { place-self: end; }
.pair .fg { z-index: 1; background: #000; border-color: #555; box-shadow: inset 0 0 0 1px #aaa; }
.channel { display: grid; grid-template-columns: 13px 87px 30px; height: 22px; padding-left: 3px; }
.channel > span { font-size: 9.500px; line-height: 18px; }
.track { height: 5px; width: 82px; margin-top: 6px; border-top: 1px solid #777; box-sizing: border-box; }
.track svg { margin: 3px 0 0 -4px; }
.channel .field { width: 29px; height: 17px; line-height: 14px; background: #fff; padding-left: 3px; font-size: 10px; border-top: 1px solid #ccc; box-sizing: border-box; }
.spectrum { width: 170px; height: 13px; margin-left: 6px; display: flex; justify-content: flex-end; background: linear-gradient(rgba(255,255,255,.9), transparent 45%, transparent 55%, #000 115%), linear-gradient(90deg, #e00, #ff0 16%, #0a3 31%, #0ae 49%, #228 66%, #e08 83%, #e11); }
.spectrum i { width: 7px; background: linear-gradient(#fff 50%, #000 50%); }

.mask { height: 216px; }
.mask-title { width: 176px; height: 33px; margin-left: 3px; border-bottom: 1px solid #999; display: grid; grid-template-columns: 138px 23px 14px; align-items: center; }
.mask-title span { padding-left: 32px; font-size: 10px; font-style: italic; font-weight: 600; color: #111; }
.ghost { color: #aaa; text-shadow: 1px 1px #f4f4f4; font-size: 10.500px; white-space: nowrap; }
.mask-slider { height: 34.500px; width: 176px; margin-left: 3px; }
.mask-slider div { display: flex; justify-content: space-between; align-items: center; padding-top: 5px; }
.mask-slider b { box-sizing: border-box; width: 47px; height: 19px; border: 1px solid #aaa; box-shadow: inset 1px 1px #eee; }
.mask-slider i { margin: 5px 5px 0; height: 2px; border-top: 1px solid #aaa; background: #fff; }
.mask-adjust { width: 175px; margin: 7px 0 0 3px; height: 71px; display: flex; justify-content: space-between; box-sizing: border-box; }
.mask-adjust > div { display: grid; gap: 8px; align-content: start; }
.mask-adjust button { width: 67px; height: 16px; line-height: 13px; box-sizing: border-box; background: #f3f3f3; border: 1px solid #aaa; border-radius: 2px; color: #777; font-size: 10.500px; }
.mask-foot { width: 176px; margin-left: 3px; border-top: 1px solid #999; display: grid; grid-template-columns: 21px 25px 110px 14px; padding-left: 5px; box-sizing: border-box; height: 14px; align-items: center; }

.layers { flex: 1; display: flex; flex-direction: column; border: 0; }
.layers .tabs { flex: none; }
.layer-row { height: 23px; display: grid; grid-template-columns: 107px 46px 36px 14px; align-items: center; padding-left: 4px; border-bottom: 1px solid #aaa; box-sizing: border-box; flex: none; }
.layer-row.locks { height: 24px; grid-template-columns: 29px 16px 16px 15px 48px 29px 36px 14px; }
.layer-row .ghost { font-size: 10.500px; }
.select { width: 103px; height: 18px; box-sizing: border-box; background: #fff; border: 1px solid #bbb; display: flex; align-items: center; justify-content: space-between; padding: 2px 2px 0 4px; font-size: 10.500px; color: #555; }
.select svg { opacity: .5; }
.percent { box-sizing: border-box; width: 35px; height: 15px; border: 1px solid #aaa; background: #d0d0d0; font-size: 10px; line-height: 13px; text-align: center; color: #555; }
.step { box-sizing: border-box; width: 14px; height: 15px; border: 1px solid #bbb; background: #eee; display: flex; align-items: center; justify-content: center; }
.step svg { opacity: .6; }
.layer-list { flex: 1; display: flex; justify-content: space-between; border-bottom: 1px solid #999; }
.layer { display: flex; height: 27px; border-bottom: 1px solid #999; box-sizing: border-box; }
.eye { width: 21px; display: flex; align-items: center; justify-content: center; border-right: 1px solid #999; box-sizing: border-box; }
.layer-main { width: 175px; box-sizing: border-box; background: #39f; display: flex; align-items: center; padding: 0 11px 0 2px; color: #fff; font-size: 10px; font-style: italic; font-weight: 600; }
.layer-main b { box-sizing: border-box; width: 28px; height: 21px; margin-right: 8px; background: #fff; border: 1px solid #000; }
.layer-main svg { margin-left: auto; }
.list-scroll { width: 13px; background: #eee; border-left: 1px solid #ddd; display: flex; flex-direction: column; justify-content: space-between; align-items: center; padding: 4px 0 3px; }
.list-scroll svg { opacity: .6; }
.layers-foot { height: 15px; display: flex; align-items: center; gap: 7.200px; padding-left: 38px; flex: none; }

/* taskbar */
.taskbar { position: relative; width: 1093px; height: 7px; box-sizing: border-box; margin-left: 5px; border-top: 1px solid #1f4263; background: linear-gradient(90deg, #5f9cba, #2e7fae 6%, #3b8fbd 35%, #3a92cf 42%, #217cc0 55%, #1a64ad 70%, #124a8c); overflow: hidden; }
.taskbar i { position: absolute; top: 1px; height: 8px; }
.orb { left: 10px; width: 28px; border-radius: 50% 50% 0 0; background: #a9bdca; }
.swoosh { left: 61px; width: 7px; background: #0a28b8; border-radius: 0 8px 0 0; }
.task { width: 49px; background: #b9dcec; border: 1px solid #356c90; box-sizing: border-box; border-radius: 3px 3px 0 0; }
.one { left: 103px; background: #8cc3de; }
.two { left: 209px; background: linear-gradient(#d8edf5, #63c7ee); width: 51px; }
.three { left: 263px; width: 50px; background: linear-gradient(100deg, #8fc5dd 55%, #aad69c 60%, #8fc5dd 70%); }
.four { left: 316px; width: 50px; background: linear-gradient(100deg, #84b6cf 60%, #d9b080 66%, #84b6cf 70%); }
.orange { left: 174px; width: 17px; border-radius: 50% 50% 0 0; background: #e77d23; }

/* custom shape picker */
.picker { position: absolute; left: 236px; top: 75px; width: 219px; height: 131px; background: #d6d6d6; border: solid #999; border-width: 0 1px 1px; box-shadow: 1px 1px #777; }
.picker-list { margin: 10px 0 0 10px; width: 179px; height: 112px; display: flex; border: 1px solid; border-color: #999 #eee #eee #999; box-sizing: border-box; }
.cells { width: 166px; display: grid; grid-template: repeat(4, 27.400px) / repeat(6, 27.400px); }
.cells > div { box-sizing: border-box; border: solid #222; border-width: 1px 0 0 1px; background: #fff; display: flex; align-items: center; justify-content: center; }
.cells > div:nth-child(6n) { border-right-width: 1px; }
.cells > .empty { background: #d6d6d6; border-color: #222 transparent transparent #d6d6d6; }
.cells > .empty:nth-child(23) { border-left-color: #222; }
.picker-scroll { width: 11px; display: flex; flex-direction: column; align-items: center; background: #eee; }
.picker-scroll span { box-sizing: border-box; width: 11px; height: 14px; display: flex; align-items: center; justify-content: center; border: 1px solid #bbb; background: #e4e4e4; }
.blue-thumb { box-sizing: border-box; width: 11px; height: 45px; margin: auto 0 1px; border: 1px solid #4a94bd; border-radius: 2px; background: linear-gradient(90deg, #e3f4fc, #a6d9f4); display: flex; align-items: center; justify-content: center; }
.flyout { position: absolute; left: 197px; top: 10px; }
.resize { position: absolute; right: 1px; bottom: 1px; }
.highlight { position: absolute; left: 222px; top: 71px; width: 246px; height: 150px; box-sizing: border-box; border: 4px solid #f00; }
.watermark { position: absolute; left: 845px; top: 725px; pointer-events: none; }
</style>
